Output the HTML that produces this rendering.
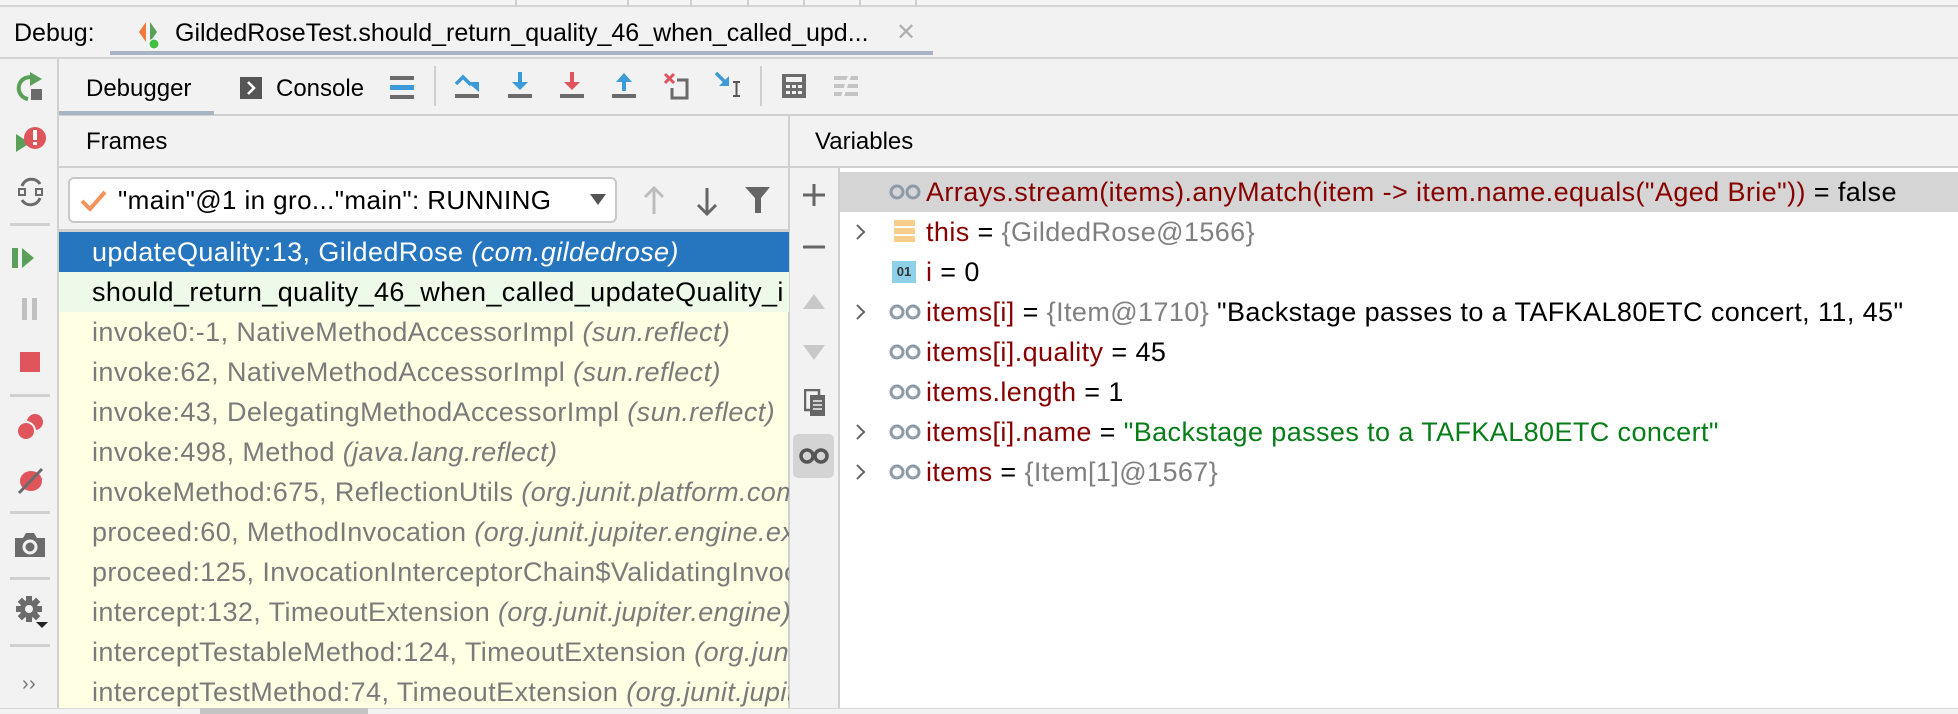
<!DOCTYPE html>
<html><head><meta charset="utf-8">
<style>
*{margin:0;padding:0;box-sizing:border-box}
body{width:1958px;height:714px;overflow:hidden;background:#f2f2f2;font-family:"Liberation Sans",sans-serif;font-size:27px;letter-spacing:0.4px;color:#000;position:relative}
.a{position:absolute}
.t{position:absolute;white-space:nowrap;line-height:40px}
.row{position:absolute;left:59px;width:730px;height:40px;line-height:40px;padding-left:33px;white-space:nowrap;overflow:hidden;color:#7a7a7a}
.row i{font-style:italic}
.vr{position:absolute;left:840px;width:1118px;height:40px;line-height:40px;white-space:nowrap}
.vr .n{color:#870000}
.vr .g{color:#808080}
.vr .s{color:#067d17}
.gl{position:absolute;left:48px;top:12px}
.ch{position:absolute;left:15px;top:11px}
.sep{position:absolute;left:10px;width:40px;height:3px;background:#d0d0d0}
</style></head><body>
<!-- top strip -->
<div class="a" style="left:0;top:0;width:1958px;height:7px;background:#f5f5f5;border-bottom:2px solid #d4d4d4"></div>
<div class="a" style="left:515px;top:0;width:2px;height:7px;background:#d0d0d0"></div>
<div class="a" style="left:627px;top:0;width:2px;height:7px;background:#d0d0d0"></div>
<div class="a" style="left:690px;top:0;width:2px;height:7px;background:#d0d0d0"></div>
<div class="a" style="left:747px;top:0;width:2px;height:7px;background:#d0d0d0"></div>
<div class="a" style="left:803px;top:0;width:2px;height:7px;background:#d0d0d0"></div>
<div class="a" style="left:859px;top:0;width:2px;height:7px;background:#d0d0d0"></div>
<div class="a" style="left:915px;top:0;width:2px;height:7px;background:#d0d0d0"></div>
<!-- debug header -->
<div class="a" style="left:0;top:57px;width:1958px;height:2px;background:#d4d4d4"></div>
<div class="t" style="left:14px;top:13px;font-size:25px;letter-spacing:0">Debug:</div>
<svg class="a" style="left:138px;top:20px" width="30" height="30"><path d="M8 2 L1 12 L8 22Z" fill="#f07a3a"/><path d="M12 2 L19 12 L12 22Z" fill="#5aa05a"/><circle cx="16" cy="24" r="5" fill="#3fc13f" stroke="#fff" stroke-width="1"/></svg>
<div class="t" style="left:175px;top:13px;font-size:25px;letter-spacing:0">GildedRoseTest.should_return_quality_46_when_called_upd...</div>
<div class="t" style="left:896px;top:13px;color:#b0b0b0;font-size:24px;letter-spacing:0">✕</div>
<div class="a" style="left:110px;top:51px;width:823px;height:4px;background:#a8b3c3"></div>
<!-- left toolbar -->
<div class="a" style="left:57px;top:59px;width:2px;height:655px;background:#d0d0d0"></div>
<svg class="a" style="left:14px;top:72px" width="32" height="32"><path d="M20 6 A11 11 0 1 0 14 27" fill="none" stroke="#5aa05a" stroke-width="4"/><path d="M16 0 L28 7 L16 14Z" fill="#5aa05a"/><rect x="17" y="17" width="11" height="11" fill="#6b6b6b"/></svg>
<svg class="a" style="left:14px;top:124px" width="34" height="32"><path d="M2 10 L16 19 L2 28Z" fill="#5aa05a"/><circle cx="21" cy="14" r="11" fill="#e0545c"/><rect x="19" y="6" width="4" height="10" fill="#fff"/><rect x="19" y="18" width="4" height="3" fill="#fff"/></svg>
<svg class="a" style="left:16px;top:176px" width="30" height="32"><path d="M6 10 A10 10 0 0 1 24 8" fill="none" stroke="#6b6b6b" stroke-width="3"/><path d="M24 22 A10 10 0 0 1 6 24" fill="none" stroke="#6b6b6b" stroke-width="3"/><rect x="3" y="13" width="6" height="6" fill="none" stroke="#6b6b6b" stroke-width="2"/><rect x="20" y="13" width="6" height="6" fill="none" stroke="#6b6b6b" stroke-width="2"/></svg>
<div class="sep" style="top:223px"></div>
<svg class="a" style="left:12px;top:248px" width="34" height="22"><rect x="0" y="0" width="6" height="20" fill="#5aa05a"/><path d="M10 0 L22 10 L10 20Z" fill="#5aa05a"/></svg>
<svg class="a" style="left:20px;top:298px" width="20" height="22"><rect x="2" y="0" width="5" height="22" fill="#c0c0c0"/><rect x="12" y="0" width="5" height="22" fill="#c0c0c0"/></svg>
<div class="a" style="left:20px;top:352px;width:20px;height:20px;background:#e0545c"></div>
<div class="sep" style="top:394px"></div>
<svg class="a" style="left:16px;top:412px" width="30" height="30"><circle cx="19" cy="10" r="9" fill="#e0545c" stroke="#f2f2f2" stroke-width="2"/><circle cx="10" cy="19" r="9" fill="#e0545c" stroke="#f2f2f2" stroke-width="2"/></svg>
<svg class="a" style="left:16px;top:466px" width="30" height="30"><ellipse cx="15" cy="15" rx="11" ry="10" fill="#e0545c"/><path d="M3 27 L26 3" stroke="#6b6b6b" stroke-width="3"/></svg>
<div class="sep" style="top:511px"></div>
<svg class="a" style="left:15px;top:533px" width="30" height="24"><path d="M0 5 H8 L11 0 H19 L22 5 H30 V24 H0Z" fill="#6b6b6b"/><circle cx="15" cy="14" r="6" fill="none" stroke="#f2f2f2" stroke-width="3"/></svg>
<div class="sep" style="top:577px"></div>
<svg class="a" style="left:16px;top:596px" width="34" height="34"><g fill="#6b6b6b"><circle cx="13" cy="13" r="9"/><rect x="10" y="0" width="6" height="26"/><rect x="0" y="10" width="26" height="6"/><rect x="10" y="0" width="6" height="26" transform="rotate(45 13 13)"/><rect x="10" y="0" width="6" height="26" transform="rotate(-45 13 13)"/></g><circle cx="13" cy="13" r="4" fill="#f2f2f2"/><path d="M20 26 H32 L26 32Z" fill="#222"/></svg>
<div class="sep" style="top:644px"></div>
<div class="t" style="left:22px;top:664px;color:#777;font-size:20px">››</div>
<!-- debugger tabs toolbar -->
<div class="a" style="left:59px;top:114px;width:1899px;height:2px;background:#d0d0d0"></div>
<div class="a" style="left:59px;top:111px;width:155px;height:4px;background:#a8b3c3"></div>
<div class="t" style="left:86px;top:69px;font-size:24px;letter-spacing:0">Debugger</div>
<svg class="a" style="left:240px;top:77px" width="22" height="22"><rect width="22" height="22" fill="#555"/><path d="M8 5 L14 11 L8 17" fill="none" stroke="#fff" stroke-width="2.5"/></svg>
<div class="t" style="left:276px;top:69px;font-size:24px;letter-spacing:0">Console</div>
<svg class="a" style="left:390px;top:76px" width="26" height="24"><rect y="0" width="24" height="4" fill="#6b6b6b"/><rect y="9" width="24" height="5" fill="#3b9bd9"/><rect y="19" width="24" height="4" fill="#6b6b6b"/></svg>
<div class="a" style="left:434px;top:66px;width:2px;height:40px;background:#cfcfcf"></div>
<svg class="a" style="left:455px;top:72px" width="28" height="28"><path d="M1 12 L8 5 L16 13" fill="none" stroke="#3b9bd9" stroke-width="3.5"/><path d="M12 10 H24 V20Z" fill="#3b9bd9"/><rect x="0" y="22" width="24" height="4" fill="#6b6b6b"/></svg>
<svg class="a" style="left:508px;top:72px" width="26" height="28"><rect x="10" y="0" width="4" height="12" fill="#3b9bd9"/><path d="M4 10 H20 L12 18Z" fill="#3b9bd9"/><rect x="0" y="22" width="24" height="4" fill="#6b6b6b"/></svg>
<svg class="a" style="left:560px;top:72px" width="26" height="28"><rect x="10" y="0" width="4" height="12" fill="#e0545c"/><path d="M4 10 H20 L12 18Z" fill="#e0545c"/><rect x="0" y="22" width="24" height="4" fill="#6b6b6b"/></svg>
<svg class="a" style="left:612px;top:72px" width="26" height="28"><path d="M4 10 H20 L12 1Z" fill="#3b9bd9"/><rect x="10" y="9" width="4" height="10" fill="#3b9bd9"/><rect x="0" y="22" width="24" height="4" fill="#6b6b6b"/></svg>
<svg class="a" style="left:663px;top:72px" width="28" height="28"><path d="M2 2 L11 11 M11 2 L2 11" stroke="#e0545c" stroke-width="3"/><path d="M14 8 H24 V26 H9 V16" fill="none" stroke="#6b6b6b" stroke-width="3"/></svg>
<svg class="a" style="left:715px;top:72px" width="30" height="30"><path d="M1 1 L12 12" stroke="#3b9bd9" stroke-width="3.5"/><path d="M14 4 V14 H4Z" fill="#3b9bd9"/><path d="M18 10 H25 M21.5 10 V24 M18 24 H25" stroke="#555" stroke-width="2"/></svg>
<div class="a" style="left:760px;top:66px;width:2px;height:40px;background:#cfcfcf"></div>
<svg class="a" style="left:782px;top:74px" width="26" height="26"><rect width="24" height="24" fill="#6b6b6b"/><rect x="4" y="3" width="16" height="5" fill="#f2f2f2"/><g fill="#f2f2f2"><rect x="4" y="11" width="4" height="3"/><rect x="10" y="11" width="4" height="3"/><rect x="16" y="11" width="4" height="3"/><rect x="4" y="17" width="4" height="3"/><rect x="10" y="17" width="4" height="3"/><rect x="16" y="17" width="4" height="3"/></g></svg>
<svg class="a" style="left:834px;top:74px" width="26" height="26"><g fill="#c4c4c4"><rect x="0" y="2" width="24" height="4"/><rect x="0" y="10" width="24" height="4"/><rect x="0" y="18" width="24" height="4"/></g><path d="M16 0 L8 24" stroke="#f2f2f2" stroke-width="3"/></svg>
<!-- frames header -->
<div class="a" style="left:59px;top:166px;width:1899px;height:2px;background:#d0d0d0"></div>
<div class="a" style="left:788px;top:116px;width:2px;height:598px;background:#d0d0d0"></div>
<div class="t" style="left:86px;top:122px;font-size:24px;letter-spacing:0">Frames</div>
<div class="t" style="left:815px;top:122px;font-size:24px;letter-spacing:0">Variables</div>
<!-- dropdown -->
<div class="a" style="left:68px;top:177px;width:549px;height:46px;background:#fff;border:2px solid #c8c8c8;border-radius:6px"></div>
<svg class="a" style="left:80px;top:190px" width="28" height="22"><path d="M2 11 L10 19 L25 2" fill="none" stroke="#f4925a" stroke-width="4"/></svg>
<div class="t" style="left:118px;top:180px;font-size:26px">"main"@1 in gro..."main": RUNNING</div>
<svg class="a" style="left:589px;top:193px" width="18" height="14"><path d="M1 1 H17 L9 12Z" fill="#555"/></svg>
<svg class="a" style="left:643px;top:186px" width="22" height="30"><path d="M11 2 V28 M2 11 L11 2 L20 11" fill="none" stroke="#bdbdbd" stroke-width="3"/></svg>
<svg class="a" style="left:696px;top:186px" width="22" height="30"><path d="M11 2 V28 M2 19 L11 28 L20 19" fill="none" stroke="#666" stroke-width="3"/></svg>
<svg class="a" style="left:745px;top:186px" width="26" height="28"><path d="M0 1 H25 L16 12 V27 H10 V12Z" fill="#666"/></svg>
<div class="a" style="left:59px;top:229px;width:729px;height:3px;background:#d0d0d0"></div>
<!-- frames list -->
<div class="a" style="left:59px;top:232px;width:729px;height:476px;background:#ffffe4"></div>
<div class="row" style="top:232px;background:#2675bf;color:#fff">updateQuality:13, GildedRose <i>(com.gildedrose)</i></div>
<div class="row" style="top:272px;background:#edfaea;color:#000">should_return_quality_46_when_called_updateQuality_i</div>
<div class="row" style="top:312px">invoke0:-1, NativeMethodAccessorImpl <i>(sun.reflect)</i></div>
<div class="row" style="top:352px">invoke:62, NativeMethodAccessorImpl <i>(sun.reflect)</i></div>
<div class="row" style="top:392px">invoke:43, DelegatingMethodAccessorImpl <i>(sun.reflect)</i></div>
<div class="row" style="top:432px">invoke:498, Method <i>(java.lang.reflect)</i></div>
<div class="row" style="top:472px">invokeMethod:675, ReflectionUtils <i>(org.junit.platform.commons)</i></div>
<div class="row" style="top:512px">proceed:60, MethodInvocation <i>(org.junit.jupiter.engine.execution)</i></div>
<div class="row" style="top:552px">proceed:125, InvocationInterceptorChain$ValidatingInvocation</div>
<div class="row" style="top:592px">intercept:132, TimeoutExtension <i>(org.junit.jupiter.engine)</i></div>
<div class="row" style="top:632px">interceptTestableMethod:124, TimeoutExtension <i>(org.junit.jupiter)</i></div>
<div class="row" style="top:672px;height:36px">interceptTestMethod:74, TimeoutExtension <i>(org.junit.jupiter)</i></div>
<!-- variables toolbar -->
<div class="a" style="left:838px;top:168px;width:2px;height:546px;background:#d0d0d0"></div>
<svg class="a" style="left:802px;top:183px" width="24" height="24"><path d="M12 1 V23 M1 12 H23" stroke="#666" stroke-width="3"/></svg>
<svg class="a" style="left:802px;top:235px" width="24" height="24"><path d="M1 12 H23" stroke="#666" stroke-width="3"/></svg>
<svg class="a" style="left:803px;top:292px" width="22" height="18"><path d="M0 17 L11 2 L22 17Z" fill="#c8c8c8"/></svg>
<svg class="a" style="left:803px;top:344px" width="22" height="18"><path d="M0 1 L11 16 L22 1Z" fill="#c8c8c8"/></svg>
<svg class="a" style="left:804px;top:389px" width="22" height="28"><rect x="1" y="1" width="14" height="20" fill="none" stroke="#666" stroke-width="2.5"/><rect x="6" y="6" width="15" height="21" fill="#666"/><path d="M9 12 H18 M9 16 H18 M9 20 H18" stroke="#f2f2f2" stroke-width="1.5"/></svg>
<div class="a" style="left:793px;top:434px;width:41px;height:44px;background:#d4d4d4;border-radius:5px"></div>
<svg class="a" style="left:799px;top:447px" width="30" height="18"><circle cx="8" cy="9" r="6" fill="none" stroke="#555" stroke-width="3.5"/><circle cx="22" cy="9" r="6" fill="none" stroke="#555" stroke-width="3.5"/></svg>
<!-- variables -->
<div class="a" style="left:840px;top:168px;width:1118px;height:540px;background:#fff"></div>
<div class="vr" style="top:172px;background:#d5d5d5"><svg class="gl" width="34" height="16"><circle cx="9" cy="8" r="6" fill="none" stroke="#8d9ba8" stroke-width="3"/><circle cx="25" cy="8" r="6" fill="none" stroke="#8d9ba8" stroke-width="3"/></svg><span class="a" style="left:86px"><span class="n">Arrays.stream(items).anyMatch(item -&gt; item.name.equals("Aged Brie"))</span> = false</span></div>
<div class="vr" style="top:212px"><svg class="ch" width="12" height="18"><path d="M2 2 L9 9 L2 16" fill="none" stroke="#666" stroke-width="2"/></svg><svg class="a" style="left:54px;top:8px" width="24" height="24"><rect x="0" y="0" width="21" height="6" fill="#f7cd8a"/><rect x="0" y="8" width="21" height="6" fill="#f7cd8a"/><rect x="0" y="16" width="21" height="6" fill="#f7cd8a"/></svg><span class="a" style="left:86px"><span class="n">this</span> = <span class="g">{GildedRose@1566}</span></span></div>
<div class="vr" style="top:252px"><div class="a" style="left:52px;top:9px;width:24px;height:22px;background:#8ed0ea;color:#333;font-size:13px;font-weight:bold;line-height:22px;text-align:center;letter-spacing:0">01</div><span class="a" style="left:86px"><span class="n">i</span> = 0</span></div>
<div class="vr" style="top:292px"><svg class="ch" width="12" height="18"><path d="M2 2 L9 9 L2 16" fill="none" stroke="#666" stroke-width="2"/></svg><svg class="gl" width="34" height="16"><circle cx="9" cy="8" r="6" fill="none" stroke="#8d9ba8" stroke-width="3"/><circle cx="25" cy="8" r="6" fill="none" stroke="#8d9ba8" stroke-width="3"/></svg><span class="a" style="left:86px"><span class="n">items[i]</span> = <span class="g">{Item@1710}</span> "Backstage passes to a TAFKAL80ETC concert, 11, 45"</span></div>
<div class="vr" style="top:332px"><svg class="gl" width="34" height="16"><circle cx="9" cy="8" r="6" fill="none" stroke="#8d9ba8" stroke-width="3"/><circle cx="25" cy="8" r="6" fill="none" stroke="#8d9ba8" stroke-width="3"/></svg><span class="a" style="left:86px"><span class="n">items[i].quality</span> = 45</span></div>
<div class="vr" style="top:372px"><svg class="gl" width="34" height="16"><circle cx="9" cy="8" r="6" fill="none" stroke="#8d9ba8" stroke-width="3"/><circle cx="25" cy="8" r="6" fill="none" stroke="#8d9ba8" stroke-width="3"/></svg><span class="a" style="left:86px"><span class="n">items.length</span> = 1</span></div>
<div class="vr" style="top:412px"><svg class="ch" width="12" height="18"><path d="M2 2 L9 9 L2 16" fill="none" stroke="#666" stroke-width="2"/></svg><svg class="gl" width="34" height="16"><circle cx="9" cy="8" r="6" fill="none" stroke="#8d9ba8" stroke-width="3"/><circle cx="25" cy="8" r="6" fill="none" stroke="#8d9ba8" stroke-width="3"/></svg><span class="a" style="left:86px"><span class="n">items[i].name</span> = <span class="s">"Backstage passes to a TAFKAL80ETC concert"</span></span></div>
<div class="vr" style="top:452px"><svg class="ch" width="12" height="18"><path d="M2 2 L9 9 L2 16" fill="none" stroke="#666" stroke-width="2"/></svg><svg class="gl" width="34" height="16"><circle cx="9" cy="8" r="6" fill="none" stroke="#8d9ba8" stroke-width="3"/><circle cx="25" cy="8" r="6" fill="none" stroke="#8d9ba8" stroke-width="3"/></svg><span class="a" style="left:86px"><span class="n">items</span> = <span class="g">{Item[1]@1567}</span></span></div>
<div class="a" style="left:0;top:708px;width:1958px;height:6px;background:#f2f2f2;border-top:1px solid #d8d8d8"></div>
<div class="a" style="left:200px;top:708px;width:168px;height:6px;background:#c4c4c4"></div>
</body></html>
